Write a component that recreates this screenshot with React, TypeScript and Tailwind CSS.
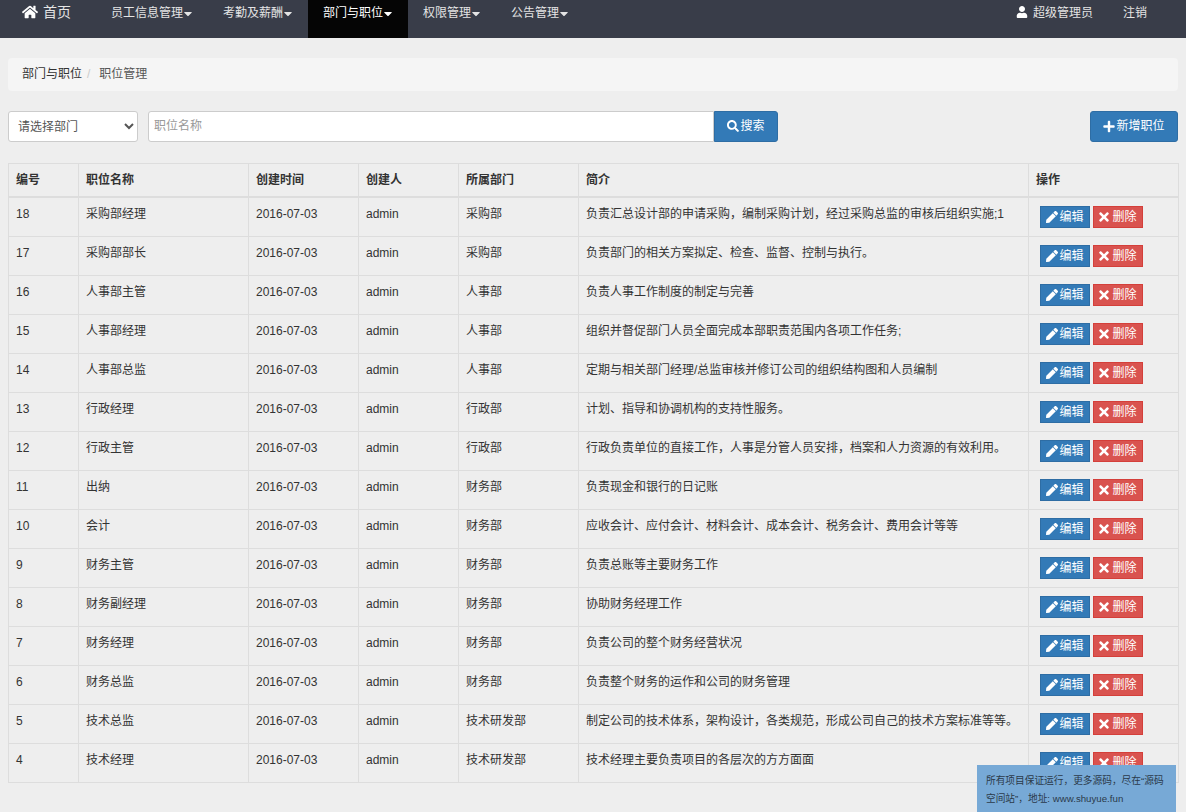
import { FaCaretDown, FaHome, FaPen, FaPlus, FaSearch, FaTimes, FaUser } from "react-icons/fa";

const rows = [
  ["18", "采购部经理", "采购部", "负责汇总设计部的申请采购，编制采购计划，经过采购总监的审核后组织实施;1"],
  ["17", "采购部部长", "采购部", "负责部门的相关方案拟定、检查、监督、控制与执行。"],
  ["16", "人事部主管", "人事部", "负责人事工作制度的制定与完善"],
  ["15", "人事部经理", "人事部", "组织并督促部门人员全面完成本部职责范围内各项工作任务;"],
  ["14", "人事部总监", "人事部", "定期与相关部门经理/总监审核并修订公司的组织结构图和人员编制"],
  ["13", "行政经理", "行政部", "计划、指导和协调机构的支持性服务。"],
  ["12", "行政主管", "行政部", "行政负责单位的直接工作，人事是分管人员安排，档案和人力资源的有效利用。"],
  ["11", "出纳", "财务部", "负责现金和银行的日记账"],
  ["10", "会计", "财务部", "应收会计、应付会计、材料会计、成本会计、税务会计、费用会计等等"],
  ["9", "财务主管", "财务部", "负责总账等主要财务工作"],
  ["8", "财务副经理", "财务部", "协助财务经理工作"],
  ["7", "财务经理", "财务部", "负责公司的整个财务经营状况"],
  ["6", "财务总监", "财务部", "负责整个财务的运作和公司的财务管理"],
  ["5", "技术总监", "技术研发部", "制定公司的技术体系，架构设计，各类规范，形成公司自己的技术方案标准等等。"],
  ["4", "技术经理", "技术研发部", "技术经理主要负责项目的各层次的方方面面"],
];

const navItems = ["员工信息管理", "考勤及薪酬", "部门与职位", "权限管理", "公告管理"];

const thClass = "border border-[#ddd] border-b-2 pl-[7px] pr-2 pt-2 pb-[7px] text-left align-top font-bold leading-[17px]";
const tdClass = "border border-[#ddd] pl-[7px] pr-2 py-2 align-top leading-[17px] h-[39px]";

export default function App() {
  return (
    <div className="relative h-[812px] overflow-hidden bg-[#eeeeee] text-[12px] text-[#333] font-['Liberation_Sans','Noto_Sans_CJK_SC',sans-serif]">
      <nav className="flex h-[38px] justify-between bg-[#393d49] pl-[7px] pr-[24px] text-[#e4e4e4]">
        <div className="flex">
          <a className="flex h-[38px] w-[89px] items-start gap-[5px] pl-[15px] pt-[3px] text-[14px] leading-[18px]">
            <FaHome className="mt-[1px] h-[16px] w-[16px] text-white" />
            首页
          </a>
          {navItems.map((item) => (
            <a
              key={item}
              className={`flex h-[38px] items-start px-[15px] pt-[5px] leading-[17px] ${item === "部门与职位" ? "bg-[#050505] text-white" : ""}`}
            >
              {item}
              <FaCaretDown className="mt-[2px] h-[13px] w-[10px]" />
            </a>
          ))}
        </div>
        <div className="flex">
          <a className="flex items-start gap-[5px] px-[15px] pt-[5px] leading-[17px]">
            <FaUser className="mt-[1px] h-[12px] w-[12px] text-white" />
            超级管理员
          </a>
          <a className="px-[15px] pt-[5px] leading-[17px]">注销</a>
        </div>
      </nav>

      <div className="px-2 pt-5">
        <div className="mb-5 flex h-[33px] items-center rounded bg-[#f5f5f5] px-[14px] leading-[17px]">
          <span>部门与职位</span>
          <span className="px-[5px] text-[#ccc]">/</span>
          <span className="ml-[4px] text-[#555]">职位管理</span>
        </div>

        <div className="mb-[21px] flex h-[31px]">
          <select className="h-[31px] w-[130px] rounded-[3px] border border-[#ccc] bg-white pl-[5px] text-[12px] text-[#555]">
            <option>请选择部门</option>
          </select>
          <input
            className="ml-[10px] h-[31px] w-[566px] rounded-l-[3px] border border-[#ccc] bg-white px-[5px] pb-[2px] text-[12px] placeholder:text-[#999]"
            placeholder="职位名称"
          />
          <button className="flex h-[31px] w-[64px] items-center justify-center gap-[1px] rounded-r-[3px] border border-[#2e6da4] bg-[#337ab7] pb-[1px] text-white">
            <FaSearch className="h-[12px] w-[12px]" />
            搜索
          </button>
          <button className="ml-auto flex h-[31px] w-[88px] items-center justify-center gap-[1px] rounded-[3px] border border-[#2e6da4] bg-[#337ab7] pb-[1px] text-white">
            <FaPlus className="h-[13px] w-[12px]" />
            新增职位
          </button>
        </div>

        <table className="w-[1170px] table-fixed border-collapse">
          <thead>
            <tr>
              <th className={`${thClass} w-[70px]`}>编号</th>
              <th className={`${thClass} w-[170px]`}>职位名称</th>
              <th className={`${thClass} w-[110px]`}>创建时间</th>
              <th className={`${thClass} w-[100px]`}>创建人</th>
              <th className={`${thClass} w-[120px]`}>所属部门</th>
              <th className={`${thClass} w-[450px]`}>简介</th>
              <th className={`${thClass} w-[150px]`}>操作</th>
            </tr>
          </thead>
          <tbody>
            {rows.map((r) => (
              <tr key={r[0]}>
                <td className={tdClass}>{r[0]}</td>
                <td className={tdClass}>{r[1]}</td>
                <td className={tdClass}>2016-07-03</td>
                <td className={tdClass}>admin</td>
                <td className={tdClass}>{r[2]}</td>
                <td className={tdClass}>{r[3]}</td>
                <td className={tdClass}>
                  <div className="ml-[4px] flex gap-[3px]">
                    <button className="flex h-[22px] w-[50px] items-center justify-center gap-[1px] border border-[#2e6da4] bg-[#337ab7] text-white">
                      <FaPen className="h-[12px] w-[12px]" />
                      编辑
                    </button>
                    <button className="flex h-[22px] w-[50px] items-center justify-center gap-[3px] border border-[#d43f3a] bg-[#d9534f] text-white">
                      <FaTimes className="h-[14px] w-[10px]" />
                      删除
                    </button>
                  </div>
                </td>
              </tr>
            ))}
          </tbody>
        </table>
      </div>

      <div className="absolute bottom-0 right-[10px] h-[47px] w-[199px] bg-[#77a9d6] px-[9px] pt-[7px] text-[9.7px] leading-[18px] text-[#2b3a4a]">
        所有项目保证运行，更多源码，尽在“源码空间站”，地址: www.shuyue.fun
      </div>
    </div>
  );
}
